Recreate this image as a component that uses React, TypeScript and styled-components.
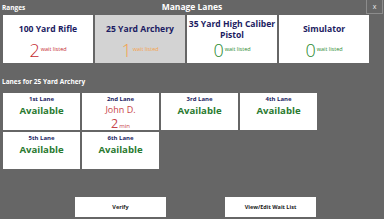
import React from 'react';
import styled, { createGlobalStyle } from 'styled-components';

const Global = createGlobalStyle`
  html, body { margin: 0; padding: 0; background: #666666; }
  body { font-family: "Open Sans", "Liberation Sans", sans-serif; }
`;

const Page = styled.div`
  width: 384px;
  height: 219px;
  background: #666666;
  position: relative;
  overflow: hidden;
  display: flex;
  flex-direction: column;
`;

const TitleBar = styled.div`
  height: 12px;
  display: flex;
  align-items: center;
  justify-content: center;
  color: #fff;
  font-weight: 700;
  font-size: 8.5px;
`;

const CloseButton = styled.div`
  position: absolute;
  top: -1px;
  right: 1px;
  width: 17px;
  height: 15px;
  border: 1px solid #8c8c8c;
  box-sizing: border-box;
  color: #e8e8e8;
  font-size: 7px;
  display: flex;
  align-items: center;
  justify-content: center;
`;

const SectionLabel = styled.div<{ $mt: number }>`
  color: #fff;
  font-weight: 700;
  font-size: 6.5px;
  padding-left: 2px;
  margin-top: ${p => p.$mt}px;
  line-height: 8px;
  height: 8px;
`;

const RangeRow = styled.div`
  display: flex;
  gap: 2px;
  padding-left: 3px;
  margin-top: 3px;
`;

const RangeCard = styled.div<{ $active?: boolean }>`
  width: 90px;
  height: 48px;
  background: ${p => (p.$active ? '#d3d3d3' : '#fff')};
  display: flex;
  flex-direction: column;
  align-items: center;
  box-sizing: border-box;
  padding-top: 3px;
`;

const RangeName = styled.div`
  color: #1c1c62;
  font-weight: 700;
  font-size: 8.6px;
  text-align: center;
  line-height: 11px;
  height: 23px;
  display: flex;
  align-items: center;
  white-space: nowrap;
`;

const CountRow = styled.div`
  display: flex;
  align-items: flex-start;
  gap: 1px;
`;

const Count = styled.span<{ $color: string }>`
  color: ${p => p.$color};
  font-size: 18px;
  font-weight: 300;
  line-height: 19px;
`;

const WaitText = styled.span<{ $color: string }>`
  color: ${p => p.$color};
  font-size: 5.5px;
  margin-top: 4px;
`;

const LaneGrid = styled.div`
  display: grid;
  grid-template-columns: repeat(4, 77px);
  grid-auto-rows: 37px;
  gap: 2px;
  padding-left: 3px;
  margin-top: 7px;
`;

const LaneCard = styled.div`
  background: #fff;
  display: flex;
  flex-direction: column;
  align-items: center;
  padding-top: 2px;
  box-sizing: border-box;
`;

const LaneName = styled.div`
  color: #1c1c62;
  font-weight: 700;
  font-size: 6px;
  line-height: 8px;
`;

const Available = styled.div`
  color: #2a7a30;
  font-weight: 700;
  font-size: 9.6px;
  line-height: 14px;
  margin-top: 1px;
`;

const Shooter = styled.div`
  color: #c8444a;
  font-size: 9px;
  line-height: 10px;
  margin-top: 2px;
`;

const MinRow = styled.div`
  color: #c8444a;
  display: flex;
  align-items: flex-end;
  line-height: 12px;
  margin-top: 3px;
`;

const MinNum = styled.span`
  font-size: 12.5px;
`;

const MinText = styled.span`
  font-size: 6px;
  margin-left: 1px;
  line-height: 8px;
`;

const ButtonRow = styled.div`
  margin-top: auto;
  margin-bottom: 2px;
  display: flex;
  padding-left: 75px;
  gap: 59px;
`;

const Button = styled.div`
  width: 91px;
  height: 20px;
  background: #fff;
  color: #222;
  font-weight: 700;
  font-size: 5.5px;
  display: flex;
  align-items: center;
  justify-content: center;
`;

const ranges = [
  { name: ['100 Yard Rifle'], count: 2, color: '#c42a30', active: false },
  { name: ['25 Yard Archery'], count: 1, color: '#f3a24a', active: true },
  { name: ['35 Yard High Caliber', 'Pistol'], count: 0, color: '#2a8a30', active: false },
  { name: ['Simulator'], count: 0, color: '#2a8a30', active: false },
];

const lanes = ['1st Lane', '2nd Lane', '3rd Lane', '4th Lane', '5th Lane', '6th Lane'];

export default function App() {
  return (
    <Page>
      <Global />
      <TitleBar>Manage Lanes</TitleBar>
      <CloseButton>x</CloseButton>
      <SectionLabel $mt={-8}>Ranges</SectionLabel>
      <RangeRow>
        {ranges.map(r => (
          <RangeCard key={r.name.join(' ')} $active={r.active}>
            <RangeName>
              {r.name.length > 1 ? (
                <span>
                  {r.name[0]}
                  <br />
                  {r.name[1]}
                </span>
              ) : (
                r.name[0]
              )}
            </RangeName>
            <CountRow>
              <Count $color={r.color}>{r.count}</Count>
              <WaitText $color={r.color}>wait listed</WaitText>
            </CountRow>
          </RangeCard>
        ))}
      </RangeRow>
      <SectionLabel $mt={15}>Lanes for 25 Yard Archery</SectionLabel>
      <LaneGrid>
        {lanes.map(l => (
          <LaneCard key={l}>
            <LaneName>{l}</LaneName>
            {l === '2nd Lane' ? (
              <>
                <Shooter>John D.</Shooter>
                <MinRow>
                  <MinNum>2</MinNum>
                  <MinText>min</MinText>
                </MinRow>
              </>
            ) : (
              <Available>Available</Available>
            )}
          </LaneCard>
        ))}
      </LaneGrid>
      <ButtonRow>
        <Button>Verify</Button>
        <Button>View/Edit Wait List</Button>
      </ButtonRow>
    </Page>
  );
}
